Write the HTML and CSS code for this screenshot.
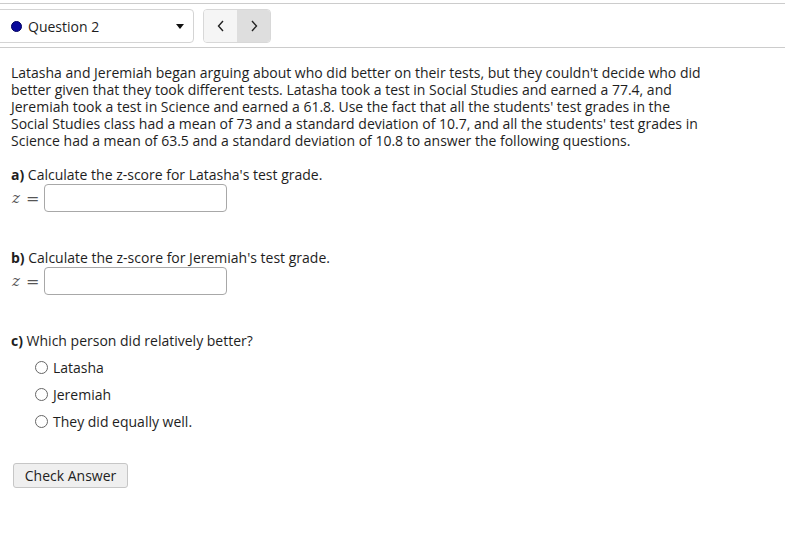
FILE: index.html
```html
<!DOCTYPE html>
<html>
<head>
<meta charset="utf-8">
<link rel="stylesheet" href="styles.css">
</head>
<body>
<div class="header">
  <div class="select">
    <span class="dot"></span>
    <span class="qname">Question 2</span>
    <span class="caret"></span>
  </div>
  <div class="nav">
    <button class="navbtn prev"><svg width="8" height="12" viewBox="0 0 8 12"><polyline points="6,1 1.5,6 6,11" fill="none" stroke="#222" stroke-width="1.4"/></svg></button>
    <button class="navbtn next"><svg width="8" height="12" viewBox="0 0 8 12"><polyline points="2,1 6.5,6 2,11" fill="none" stroke="#222" stroke-width="1.4"/></svg></button>
  </div>
</div>
<div class="question">
  <p class="intro">Latasha and Jeremiah began arguing about who did better on their tests, but they couldn't decide who did better given that they took different tests. Latasha took a test in Social Studies and earned a 77.4, and Jeremiah took a test in Science and earned a 61.8. Use the fact that all the students' test grades in the Social Studies class had a mean of 73 and a standard deviation of 10.7, and all the students' test grades in Science had a mean of 63.5 and a standard deviation of 10.8 to answer the following questions.</p>
  <p class="part"><b>a)</b> Calculate the z-score for Latasha's test grade.</p>
  <div class="answer"><span class="math"><span class="zv">z</span><span class="eq">=</span></span><input class="box" type="text"></div>
  <p class="part"><b>b)</b> Calculate the z-score for Jeremiah's test grade.</p>
  <div class="answer"><span class="math"><span class="zv">z</span><span class="eq">=</span></span><input class="box" type="text"></div>
  <p class="part"><b>c)</b> Which person did relatively better?</p>
  <ul class="choices">
    <li><span class="radio"></span>Latasha</li>
    <li><span class="radio"></span>Jeremiah</li>
    <li><span class="radio"></span>They did equally well.</li>
  </ul>
  <button class="check">Check Answer</button>
</div>
</body>
</html>
```
FILE: styles.css
```css
body{margin:0;font-family:"Open Sans",sans-serif;font-size:14px;color:#1e1e1e;background:#fff;}
.header{margin-top:3px;border-top:1px solid #ccc;border-bottom:1px solid #ccc;height:45px;display:flex;align-items:flex-start;gap:9px;padding-top:5px;box-sizing:border-box;}
.select{margin-left:-6px;width:200px;height:34px;box-sizing:border-box;border:1px solid #d4d4d4;border-radius:4px;display:flex;align-items:center;padding-left:16px;padding-right:8px;}
.dot{width:11px;height:11px;border-radius:50%;background:#0a0a9c;border:1px solid #000060;box-sizing:border-box;margin-right:6px;}
.qname{flex:1;font-size:14px;}
.caret{width:0;height:0;border-left:4px solid transparent;border-right:4px solid transparent;border-top:5px solid #111;margin-right:1px;}
.nav{display:flex;height:34px;border:1px solid #d8d8d8;border-radius:4px;overflow:hidden;box-sizing:border-box;}
.navbtn{width:33px;height:100%;border:0;margin:0;padding:0;display:flex;align-items:center;justify-content:center;}
.prev{background:#f5f5f5;}
.next{background:#dedede;}
.question{padding:16px 11px 0;max-width:700px;}
p{margin:0;line-height:17px;}
.intro{margin-bottom:17px;}
.part{margin-bottom:1px;}
.answer{display:flex;align-items:center;height:28px;margin-bottom:37px;}
.math{font-family:"DejaVu Serif",serif;color:#555;width:32px;padding-left:1px;display:flex;align-items:center;}
.zv{font-style:italic;font-size:15px;margin-right:6px;}
.eq{font-family:"DejaVu Sans",sans-serif;font-size:16px;}
.box{width:183px;height:28px;box-sizing:border-box;border:1px solid #a8a8a8;border-radius:4px;margin:0;padding:0 4px;}
.choices{list-style:none;margin:10px 0 0;padding:0 0 0 24px;}
.choices li{display:flex;align-items:center;height:17px;margin-bottom:10px;}
.radio{width:13px;height:13px;border:1px solid #666;border-radius:50%;box-sizing:border-box;margin-right:5px;background:#fff;}
.check{margin:23px 0 0 2px;width:115px;height:25px;border:1px solid #c6c6c6;border-radius:3px;background:#efefef;font-family:"Open Sans",sans-serif;font-size:14px;color:#222;padding:0;}
```
